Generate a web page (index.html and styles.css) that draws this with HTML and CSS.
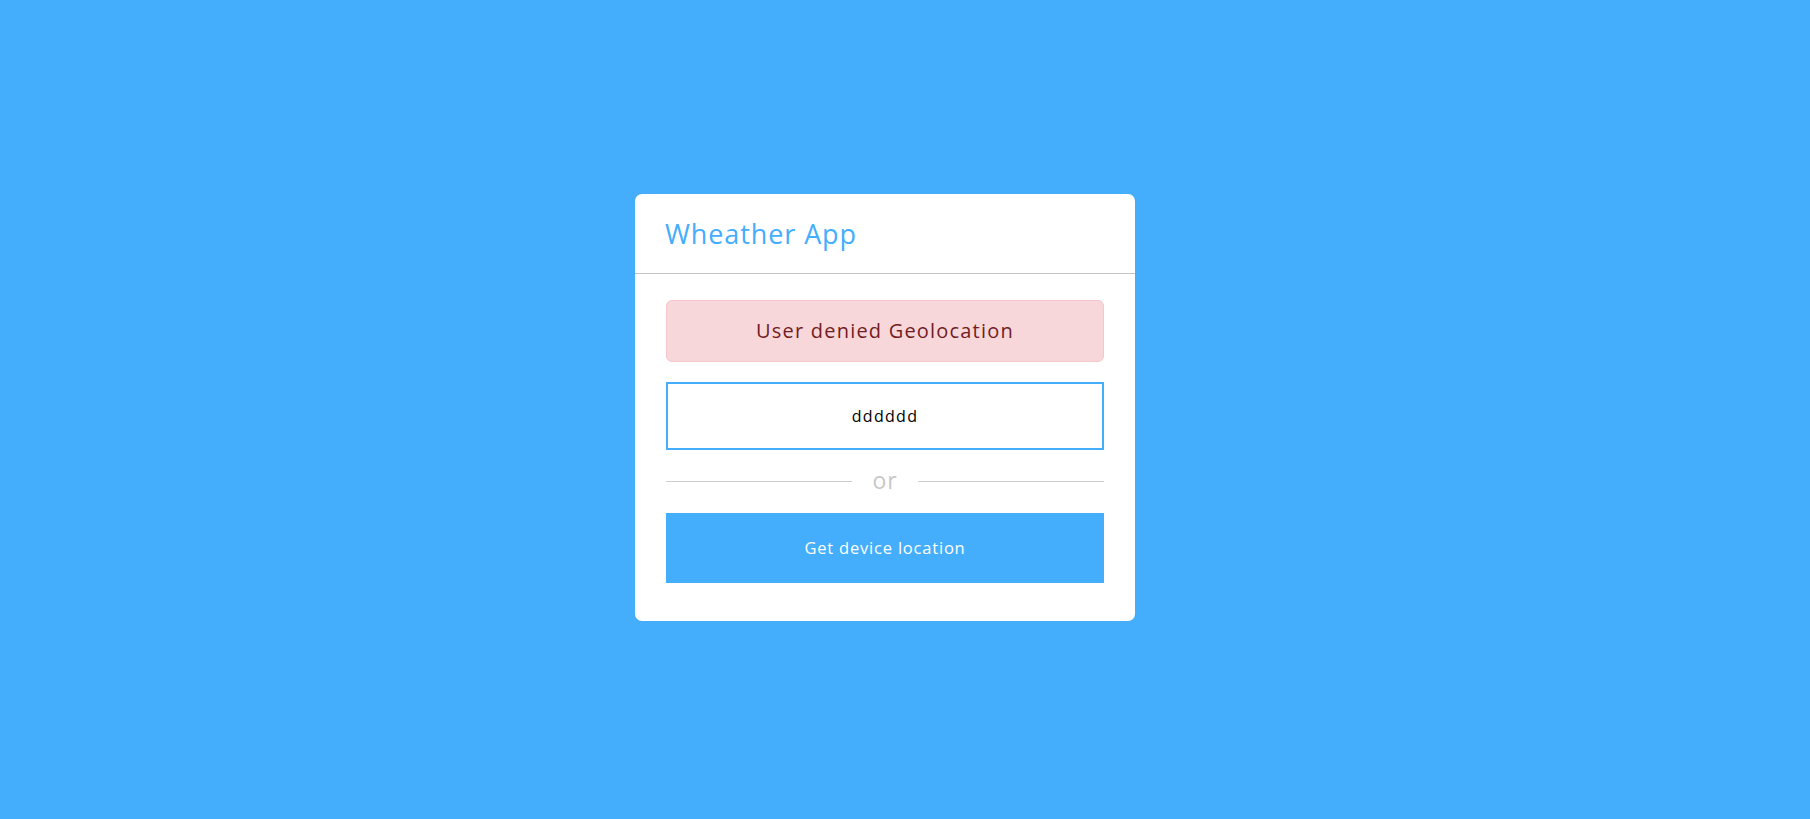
FILE: index.html
```html
<!DOCTYPE html>
<html lang="en">
<head>
<meta charset="utf-8">
<title>Wheather App</title>
<link rel="stylesheet" href="styles.css">
</head>
<body>
<main class="page">
  <section class="card">
    <header class="card-header">
      <h1 class="title">Wheather App</h1>
    </header>
    <div class="card-body">
      <div class="alert">User denied Geolocation</div>
      <input class="city-input" type="text" value="dddddd">
      <div class="divider"><span class="divider-text">or</span></div>
      <button class="locate-btn" type="button">Get device location</button>
    </div>
  </section>
</main>
</body>
</html>
```

FILE: styles.css
```css
* { box-sizing: border-box; }
html, body { margin: 0; padding: 0; }
body {
  background: #44aefc;
  font-family: "Open Sans", "Noto Sans", sans-serif;
}
.page {
  height: 100vh;
  display: flex;
  align-items: center;
  justify-content: center;
  padding: 0 40px 5px 0;
}
.card {
  width: 500px;
  background: #fff;
  border-radius: 7px;
  display: flex;
  flex-direction: column;
}
.card-header {
  height: 80px;
  padding: 0 30px;
  display: flex;
  align-items: center;
  border-bottom: 1px solid #c4c4c4;
}
.title {
  margin: 0;
  font-size: 27px;
  font-weight: 500;
  color: #44aefc;
  letter-spacing: 0.9px;
}
.card-body {
  padding: 26px 31px 38px;
  display: flex;
  flex-direction: column;
}
.alert {
  height: 62px;
  display: flex;
  align-items: center;
  justify-content: center;
  background: #f8d7da;
  border: 1px solid #f5c6cb;
  border-radius: 6px;
  color: #721c24;
  font-size: 20px;
  letter-spacing: 1.2px;
}
.city-input {
  margin-top: 20px;
  height: 68px;
  width: 100%;
  border: 2px solid #44aefc;
  outline: none;
  background: #fff;
  text-align: center;
  font-family: inherit;
  font-size: 16px;
  color: #000;
  letter-spacing: 1.3px;
}
.divider {
  margin-top: 18px;
  height: 28px;
  display: flex;
  align-items: center;
  gap: 20px;
}
.divider::before, .divider::after {
  content: "";
  flex: 1;
  height: 1px;
  background: #cccccc;
}
.divider-text {
  font-size: 23px;
  color: #c8c8c8;
  line-height: 1;
  padding-bottom: 3px;
  letter-spacing: 1px;
}
.locate-btn {
  margin-top: 17px;
  height: 70px;
  width: 100%;
  border: none;
  background: #44aefc;
  color: #fff;
  font-family: inherit;
  font-size: 16.5px;
  font-weight: 500;
  letter-spacing: 0.8px;
  cursor: pointer;
}
```
